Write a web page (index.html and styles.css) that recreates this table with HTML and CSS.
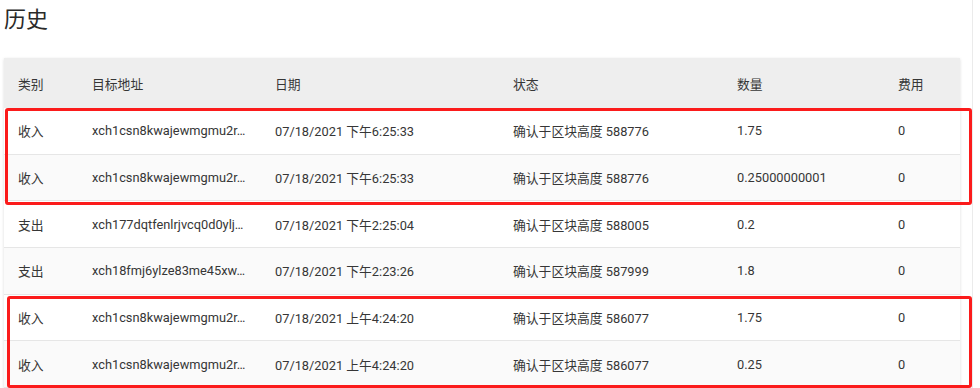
FILE: index.html
```html
<!DOCTYPE html>
<html lang="zh-CN">
<head>
<meta charset="utf-8">
<title>历史</title>
<link rel="stylesheet" href="styles.css">
</head>
<body>
<div class="page">
  <div class="content">
    <h1 class="title">历史</h1>
    <div class="table">
      <div class="row head">
        <div class="cell">类别</div>
        <div class="cell">目标地址</div>
        <div class="cell">日期</div>
        <div class="cell">状态</div>
        <div class="cell">数量</div>
        <div class="cell">费用</div>
      </div>
      <div class="row">
        <div class="cell">收入</div>
        <div class="cell">xch1csn8kwajewmgmu2r…</div>
        <div class="cell">07/18/2021 下午6:25:33</div>
        <div class="cell">确认于区块高度 588776</div>
        <div class="cell">1.75</div>
        <div class="cell">0</div>
      </div>
      <div class="row alt">
        <div class="cell">收入</div>
        <div class="cell">xch1csn8kwajewmgmu2r…</div>
        <div class="cell">07/18/2021 下午6:25:33</div>
        <div class="cell">确认于区块高度 588776</div>
        <div class="cell">0.25000000001</div>
        <div class="cell">0</div>
      </div>
      <div class="row">
        <div class="cell">支出</div>
        <div class="cell">xch177dqtfenlrjvcq0d0ylj…</div>
        <div class="cell">07/18/2021 下午2:25:04</div>
        <div class="cell">确认于区块高度 588005</div>
        <div class="cell">0.2</div>
        <div class="cell">0</div>
      </div>
      <div class="row alt">
        <div class="cell">支出</div>
        <div class="cell">xch18fmj6ylze83me45xw…</div>
        <div class="cell">07/18/2021 下午2:23:26</div>
        <div class="cell">确认于区块高度 587999</div>
        <div class="cell">1.8</div>
        <div class="cell">0</div>
      </div>
      <div class="row">
        <div class="cell">收入</div>
        <div class="cell">xch1csn8kwajewmgmu2r…</div>
        <div class="cell">07/18/2021 上午4:24:20</div>
        <div class="cell">确认于区块高度 586077</div>
        <div class="cell">1.75</div>
        <div class="cell">0</div>
      </div>
      <div class="row alt">
        <div class="cell">收入</div>
        <div class="cell">xch1csn8kwajewmgmu2r…</div>
        <div class="cell">07/18/2021 上午4:24:20</div>
        <div class="cell">确认于区块高度 586077</div>
        <div class="cell">0.25</div>
        <div class="cell">0</div>
      </div>
    </div>
  </div>
  <div class="mark mark-one"></div>
  <div class="mark mark-two"></div>
</div>
</body>
</html>
```
FILE: styles.css
```css
html, body {
  margin: 0;
  padding: 0;
  background: #ffffff;
}

body {
  font-family: Roboto, "Noto Sans CJK SC", sans-serif;
  color: #363636;
  height: 388px;
  overflow: hidden;
}

.page {
  position: relative;
  width: 973px;
  height: 388px;
  border-right: 1px solid #ebebeb;
  box-sizing: border-box;
}

.content {
  padding-left: 4px;
  width: 956px;
}

.title {
  margin: 0;
  height: 58px;
  font-family: "Noto Sans CJK SC", sans-serif;
  font-size: 22px;
  font-weight: 400;
  line-height: 34px;
  color: #2a2a2a;
}

.table {
  background: #ffffff;
  box-shadow: 0 1px 3px rgba(0, 0, 0, 0.14);
}

.row {
  display: grid;
  grid-template-columns: 74px 183px 238px 224px 161px 1fr;
  height: 46.67px;
  align-items: center;
  border-bottom: 1px solid #e6e6e6;
  box-sizing: border-box;
  font-size: 12.8px;
}

.row.head {
  height: 50px;
  background: #eeeeee;
  border-bottom: none;
}

.row.alt {
  background: #fafafa;
}

.cell {
  padding-left: 14px;
  white-space: nowrap;
  overflow: hidden;
}

.mark {
  position: absolute;
  border: 3px solid #fb1b1b;
  border-radius: 3px;
  box-sizing: border-box;
}

.mark-one {
  left: 5px;
  top: 108px;
  width: 967px;
  height: 97px;
}

.mark-two {
  left: 7px;
  top: 296px;
  width: 965px;
  height: 92px;
}
```
